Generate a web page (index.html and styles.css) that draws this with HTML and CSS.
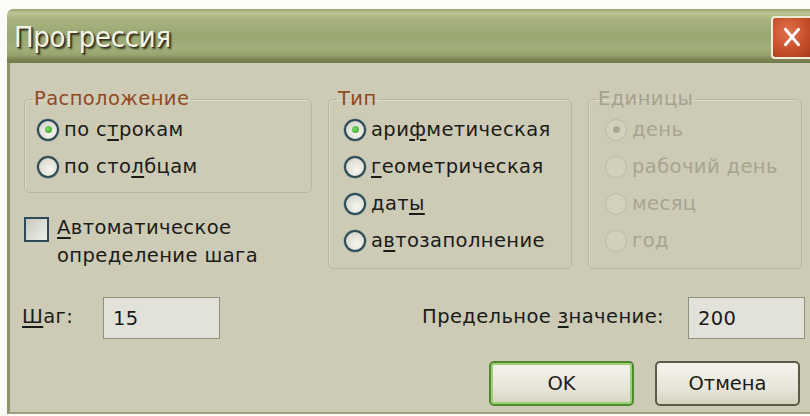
FILE: index.html
```html
<!DOCTYPE html>
<html lang="ru">
<head>
<meta charset="utf-8">
<title>Прогрессия</title>
<link rel="stylesheet" href="styles.css">
</head>
<body>
<div class="window">
  <div class="titlebar">
    <span class="title">Прогрессия</span>
    <span class="close"><svg viewBox="0 0 20 20" width="22" height="22"><path d="M4 3 L16 17 M16 3 L4 17" stroke="#fff" stroke-width="2.6" stroke-linecap="round"/></svg></span>
  </div>
  <div class="client">
    <div class="groups">
      <div class="leftcol">
        <fieldset class="group g-layout">
          <legend>Расположение</legend>
          <label class="opt"><span class="radio checked"></span><span>по с<u>т</u>рокам</span></label>
          <label class="opt"><span class="radio"></span><span>по сто<u>л</u>бцам</span></label>
        </fieldset>
        <label class="check"><span class="box"></span><span><u>А</u>втоматическое<br>определение шага</span></label>
      </div>
      <fieldset class="group g-type">
        <legend>Тип</legend>
        <label class="opt"><span class="radio checked"></span><span>ари<u>ф</u>метическая</span></label>
        <label class="opt"><span class="radio"></span><span><u>г</u>еометрическая</span></label>
        <label class="opt"><span class="radio"></span><span>дат<u>ы</u></span></label>
        <label class="opt"><span class="radio"></span><span>а<u>в</u>тозаполнение</span></label>
      </fieldset>
      <fieldset class="group g-units disabled">
        <legend>Единицы</legend>
        <label class="opt"><span class="radio checked"></span><span>день</span></label>
        <label class="opt"><span class="radio"></span><span>рабочий день</span></label>
        <label class="opt"><span class="radio"></span><span>месяц</span></label>
        <label class="opt"><span class="radio"></span><span>год</span></label>
      </fieldset>
    </div>
    <div class="fields">
      <div class="field step">
        <span class="lbl"><u>Ш</u>аг:</span>
        <span class="input">15</span>
      </div>
      <div class="field limit">
        <span class="lbl">Предельное <u>з</u>начение:</span>
        <span class="input">200</span>
      </div>
    </div>
    <div class="buttons">
      <button class="btn default">OK</button>
      <button class="btn">Отмена</button>
    </div>
  </div>
</div>
</body>
</html>
```

FILE: styles.css
```css
html, body {
  margin: 0;
  padding: 0;
  background: #fbfbf8;
  overflow: hidden;
  width: 810px;
  height: 416px;
}

body {
  font-family: "DejaVu Sans", Verdana, sans-serif;
  font-size: 19.5px;
  letter-spacing: 0.4px;
  color: #1b1b18;
}

u { text-decoration-thickness: 2px; text-underline-offset: 3px; }

.window {
  margin: 9px 0 0 7px;
  width: 803px;
  height: 405px;
  display: flex;
  flex-direction: column;
}

/* caption bar */
.titlebar {
  height: 54px;
  flex: none;
  display: flex;
  align-items: center;
  justify-content: space-between;
  background: linear-gradient(to bottom,
    #97a46e 0px, #bcc592 4px, #a9b381 10px, #9ba872 26px,
    #a2ad78 40px, #98a46d 46px, #7c8652 50px, #6f7848 54px);
  border-top-left-radius: 6px;
}

.title {
  font-family: "DejaVu Sans Condensed", "DejaVu Sans", sans-serif;
  font-size: 29px;
  letter-spacing: -0.3px;
  color: #f4f3e6;
  margin-left: 7px;
  margin-top: 2px;
  text-shadow: 2px 2px 2px #2e2f1a, 1px 1px 0 #45462c;
}

.close {
  width: 39px;
  height: 43px;
  margin-top: 2px;
  border: 2px solid #f0ead8;
  border-right: none;
  border-radius: 4px 0 0 4px;
  background: radial-gradient(circle at 40% 35%, #e0724e 0%, #c9502c 55%, #a63b1c 100%);
  display: flex;
  align-items: center;
  justify-content: center;
  box-sizing: border-box;
}

/* dialog body */
.client {
  flex: 1;
  background: #cdcab5;
  border-left: 3px solid #8e9568;
  border-bottom: 2px solid #9ea07e;
  padding: 25px 0 0 14px;
  display: flex;
  flex-direction: column;
}

.groups {
  display: flex;
  align-items: flex-start;
  gap: 16px;
}

.leftcol {
  width: 288px;
  display: flex;
  flex-direction: column;
}

.group {
  margin: 0;
  border: 1px solid #b9b6a1;
  border-radius: 5px;
  padding: 1px 8px 7px 12px;
  box-shadow: inset 1px 1px 0 #dcd9c7;
}

.group legend {
  padding: 0 1px;
  margin-left: -4px;
  line-height: 22px;
  color: #8f4b22;
}

.g-type { width: 244px; box-sizing: border-box; padding-left: 15px; padding-bottom: 9px; }
.g-type legend { margin-left: -7px; }
.g-units { width: 214px; box-sizing: border-box; padding-left: 16px; padding-bottom: 9px; }
.g-units legend { margin-left: -8px; }

.opt {
  display: flex;
  align-items: center;
  height: 37px;
  gap: 5px;
  white-space: nowrap;
}

.radio {
  width: 18px;
  height: 18px;
  flex: none;
  border-radius: 50%;
  border: 2.5px solid #2a4a55;
  background: radial-gradient(circle at 60% 65%, #f6f6f0 0%, #dedcd2 65%, #c4c3b6 100%);
  box-shadow: 0 0 0 0.5px #8f9a9a;
  display: flex;
  align-items: center;
  justify-content: center;
}

.radio.checked::after {
  content: "";
  width: 7px;
  height: 7px;
  border-radius: 50%;
  background: radial-gradient(circle at 40% 40%, #7ddc6a, #2e9a24);
}

.disabled legend { color: #a5a290; }
.disabled .opt { color: #a7a492; }
.disabled .radio {
  border-color: #bdbaa6;
  border-width: 1.5px;
  background: #d3d0bd;
  box-shadow: none;
  width: 20px;
  height: 20px;
}
.disabled .radio.checked::after { background: #aaa795; }

.check {
  display: flex;
  align-items: flex-start;
  gap: 8px;
  margin-top: 21px;
  line-height: 28px;
}

.check .box {
  width: 21px;
  height: 21px;
  flex: none;
  margin-top: 3px;
  border: 2px solid #2c4a5a;
  background: linear-gradient(135deg, #c8c8be, #efefe8);
}

/* numeric fields */
.fields {
  display: flex;
  justify-content: space-between;
  margin-top: 27px;
  padding-right: 5px;
}

.field {
  display: flex;
  align-items: center;
}

.step .lbl { width: 81px; margin-left: -2px; padding-bottom: 4px; }
.limit .lbl { margin-right: 24px; padding-bottom: 4px; }

.input {
  width: 117px;
  height: 42px;
  box-sizing: border-box;
  border: 1px solid #8f927a;
  background: #e3e2da;
  padding: 6px 9px 0;
  line-height: 30px;
}

/* dialog buttons */
.buttons {
  display: flex;
  justify-content: flex-end;
  gap: 21px;
  margin-top: 22px;
  padding-right: 10px;
}

.btn {
  font: inherit;
  color: #1b1b18;
  width: 145px;
  height: 45px;
  border: 2px solid #5b5b48;
  border-radius: 5px;
  background: linear-gradient(to bottom, #f4f3ec 0%, #e8e6da 60%, #d6d3c2 100%);
  padding: 0;
}

.btn.default {
  border-color: #4f8a2c;
  box-shadow: inset 0 0 0 2px #9bd074;
}
```
